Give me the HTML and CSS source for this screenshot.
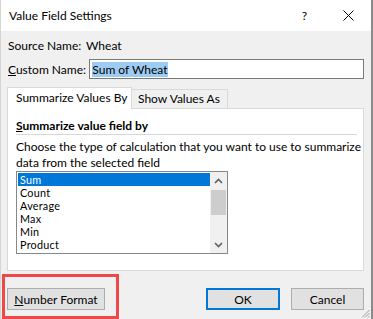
FILE: index.html
```html
<!DOCTYPE html>
<html lang="en">
<head>
<meta charset="UTF-8">
<title>Value Field Settings</title>
<link rel="stylesheet" href="styles.css">
</head>
<body>
<div class="dialog">
<div class="titlebar">
<span class="title">Value Field Settings</span>
<span class="help">?</span>
<svg class="close" width="11" height="11" viewBox="0 0 11 11"><path d="M0.5 0.5 L10.5 10.5 M10.5 0.5 L0.5 10.5" stroke="#000" stroke-width="1" fill="none"/></svg>
</div>

<div class="content">
<div class="row source">
<span class="label">Source Name:</span>
<span>Wheat</span>
</div>
<div class="row custom">
<span class="label"><u>C</u>ustom Name:</span>
<div class="textbox"><span class="sel">Sum of Wheat</span></div>
</div>

<div class="tabs">
<div class="tab active">Summarize Values By</div>
<div class="tab">Show Values As</div>
</div>
<div class="panel">
<div class="heading"><u>S</u>ummarize value field by</div>
<p class="desc">Choose the type of calculation that you want to use to summarize<br>data from the selected field</p>
<div class="listbox">
<ul class="items">
<li class="selected">Sum</li>
<li>Count</li>
<li>Average</li>
<li>Max</li>
<li>Min</li>
<li>Product</li>
</ul>
<div class="scrollbar">
<div class="arrow"><svg width="9" height="6" viewBox="0 0 9 6"><path d="M1 5 L4.5 1.5 L8 5" stroke="#606060" stroke-width="1.6" fill="none"/></svg></div>
<div class="thumb"></div>
<div class="track"></div>
<div class="arrow"><svg width="9" height="6" viewBox="0 0 9 6"><path d="M1 1 L4.5 4.5 L8 1" stroke="#606060" stroke-width="1.6" fill="none"/></svg></div>
</div>
</div>
</div>

<div class="buttons">
<button class="btn wide"><u>N</u>umber Format</button>
<div class="right">
<button class="btn default">OK</button>
<button class="btn">Cancel</button>
</div>
</div>
</div>

<div class="highlight"></div>
<svg class="grip" width="8" height="8" viewBox="0 0 8 8"><path d="M7.5 0 L0 7.5 M7.5 3 L3 7.5 M7.5 6 L6 7.5" stroke="#a0a0a0" stroke-width="1" fill="none"/></svg>
</div>
</body>
</html>
```

FILE: styles.css
```css
* {
box-sizing: border-box;
}
body {
margin: 0;
background-color: #ffffff;
font-family: Lato, "Liberation Sans", Arial, sans-serif;
font-size: 12px;
color: #000;
}
.dialog {
position: relative;
width: 373px;
height: 319px;
background-color: #f0f0f0;
border-left: 1px solid #d4d4d4;
border-right: 2px solid #8a8a8a;
overflow: hidden;
white-space: nowrap;
}
.titlebar {
height: 31px;
background-color: #fff;
display: flex;
align-items: center;
padding-left: 8px;
}
.title {
flex: 1;
}
.help {
margin-right: 36px;
}
.close {
margin-right: 17px;
}
.content {
padding: 0 7px 0 6px;
}
.row {
display: flex;
align-items: center;
padding-left: 1px;
}
.source {
margin-top: 6px;
height: 16px;
}
.source .label {
width: 78px;
}
.custom {
margin-top: 6px;
}
.custom .label {
width: 82px;
}
.textbox {
width: 277px;
height: 20px;
border: 1px solid #7a7a7a;
background-color: #fff;
display: flex;
align-items: center;
padding-left: 2px;
}
.sel {
background-color: #9ecbf1;
line-height: 15px;
}
.tabs {
display: flex;
align-items: flex-end;
margin-top: 8px;
height: 21px;
}
.tab {
border: 1px solid #d9d9d9;
border-bottom: none;
background-color: #f0f0f0;
height: 19px;
line-height: 18px;
padding-left: 6px;
width: 96px;
border-left: none;
}
.tab.active {
background-color: #fff;
height: 22px;
line-height: 20px;
padding-left: 8px;
width: 125px;
margin-bottom: -1px;
border-left: 1px solid #d9d9d9;
position: relative;
z-index: 1;
}
.panel {
width: 357px;
height: 163px;
background-color: #fff;
border: 1px solid #d9d9d9;
padding: 9px 6px 0 8px;
}
.heading {
font-weight: bold;
line-height: 16px;
border-bottom: 1px solid #d7d7d7;
}
.desc {
margin: 4px 0 0 0;
line-height: 16px;
}
.listbox {
display: flex;
width: 212px;
height: 83px;
border: 1px solid #828790;
}
.items {
list-style: none;
margin: 0;
padding: 1px 0 0 1px;
width: 193px;
font-size: 10.8px;
letter-spacing: 0.25px;
}
.items li {
height: 13px;
line-height: 13px;
padding-left: 2px;
}
.items li.selected {
background-color: #0078d7;
color: #fff;
}
.scrollbar {
width: 17px;
display: flex;
flex-direction: column;
background-color: #f0f0f0;
}
.arrow {
height: 17px;
display: flex;
align-items: center;
justify-content: center;
}
.thumb {
height: 25px;
margin: 1px 1px 0 1px;
background-color: #cdcdcd;
}
.track {
flex: 1;
}
.buttons {
display: flex;
justify-content: space-between;
margin-top: 17px;
}
.right {
display: flex;
gap: 11px;
}
.btn {
height: 22px;
font-family: Lato, "Liberation Sans", Arial, sans-serif;
font-size: 12px;
background-color: #e1e1e1;
border: 1px solid #adadad;
padding: 0;
width: 73px;
color: #000;
}
.btn.wide {
width: 98px;
}
.btn.default {
border: 2px solid #0078d7;
width: 74px;
}
.highlight {
position: absolute;
left: 1px;
top: 274px;
width: 117px;
height: 45px;
border: 3px solid #ef4848;
}
.grip {
position: absolute;
right: 1px;
bottom: 1px;
}
```
